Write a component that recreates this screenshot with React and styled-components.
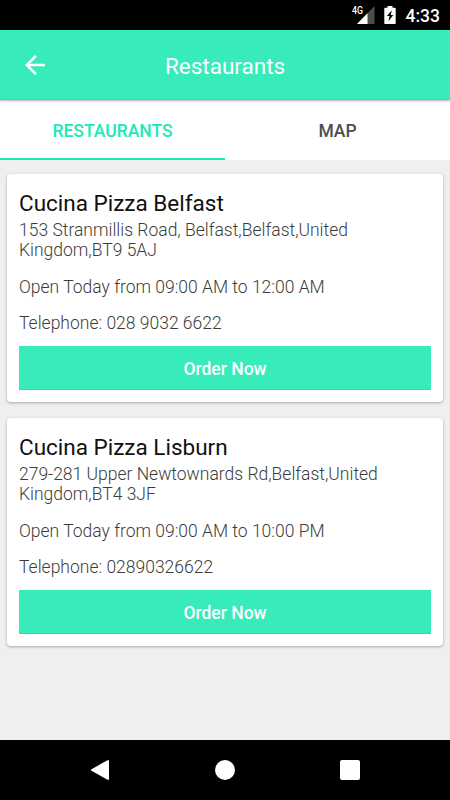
/* ------------------------------------------
   Restaurants - Screen
--------------------------------------------- */
import React from 'react';
import styled, { createGlobalStyle } from 'styled-components';

const restaurants = [
  {
    name: 'Cucina Pizza Belfast',
    address: '153 Stranmillis Road, Belfast,Belfast,United Kingdom,BT9 5AJ',
    hours: 'Open Today from 09:00 AM to 12:00 AM',
    phone: '028 9032 6622',
  },
  {
    name: 'Cucina Pizza Lisburn',
    address: '279-281 Upper Newtownards Rd,Belfast,United Kingdom,BT4 3JF',
    hours: 'Open Today from 09:00 AM to 10:00 PM',
    phone: '02890326622',
  },
];

const SignalIcon = () => (
  <svg width="18" height="18" viewBox="0 0 18 18">
    <path d="M17.500 0v18H0z" fill="#4d4d4d" />
    <path d="M10.500 7.200V18H0z" fill="#fff" />
  </svg>
);

const BatteryIcon = () => (
  <svg width="12" height="18" viewBox="0 0 12 18">
    <path d="M3.500 0h5v1.800H11q.7 0 .7.7V17.300q0 .7-.7.7H1q-.7 0-.7-.7V2.500q0-.7.7-.7h2.500z" fill="#fff" />
    <path d="M7.800 4.300L2.900 10h2.600l-1 5.200L9.300 9H6.700z" fill="#000" />
  </svg>
);

const BackArrow = () => (
  <svg width="30" height="30" viewBox="0 0 24 24">
    <path d="M20 11H7.830l5.590-5.590L12 4l-8 8 8 8 1.410-1.410L7.830 13H20z" fill="#fff" />
  </svg>
);

const NavBack = () => (
  <svg width="20" height="22" viewBox="0 0 20 22">
    <path d="M18 2v18L2 11z" fill="#fff" stroke="#fff" strokeWidth="2" strokeLinejoin="round" />
  </svg>
);

const App = () => (
  <Screen>
    <GlobalStyle />
    <StatusBar>
      <Signal>
        <Network>4G</Network>
        <SignalIcon />
      </Signal>
      <BatteryIcon />
      <Clock>4:33</Clock>
    </StatusBar>
    <Header>
      <BackButton aria-label="Back"><BackArrow /></BackButton>
      <Title>Restaurants</Title>
    </Header>
    <Tabs>
      <Tab $active>Restaurants</Tab>
      <Tab>Map</Tab>
    </Tabs>
    <List>
      {restaurants.map(({ name, address, hours, phone }) => (
        <Card key={name}>
          <Name>{name}</Name>
          <Detail>{address}</Detail>
          <Detail>{hours}</Detail>
          <Detail>Telephone: {phone}</Detail>
          <OrderButton>Order Now</OrderButton>
        </Card>
      ))}
    </List>
    <NavBar>
      <NavBack />
      <NavHome />
      <NavRecent />
    </NavBar>
  </Screen>
);

const GlobalStyle = createGlobalStyle`
  * {
    box-sizing: border-box;
  }
  body {
    margin: 0;
  }
`;

const Screen = styled.div`
  background-color: #efefef;
  display: flex;
  flex-direction: column;
  font-family: Roboto, sans-serif;
  height: 800px;
  overflow: hidden;
  width: 450px;
`;

const StatusBar = styled.div`
  align-items: center;
  background-color: #000;
  display: flex;
  flex: none;
  height: 30px;
  justify-content: flex-end;
  padding-right: 10px;
`;

const Signal = styled.div`
  display: flex;
  margin-right: 9.5px;
  position: relative;
`;

const Network = styled.span`
  color: #fff;
  font-size: 11px;
  font-weight: 500;
  left: -5px;
  line-height: 10px;
  position: absolute;
  top: 0;
  transform: scaleX(.8);
  transform-origin: left;
`;

const Clock = styled.span`
  color: #fff;
  font-size: 17.5px;
  font-weight: 500;
  margin: 1px 0 0 9.5px;
`;

const Header = styled.header`
  align-items: center;
  background-color: #37ebba;
  border-bottom: 1px solid #1ee6b0;
  border-top: 1px solid #2df5c1;
  box-shadow: 0 1px 2px rgba(0, 0, 0, .3);
  display: grid;
  flex: none;
  grid-template-columns: 70px 1fr 70px;
  height: 70px;
  z-index: 1;
`;

const BackButton = styled.button`
  background: none;
  border: 0;
  display: flex;
  justify-content: center;
  padding: 0;
`;

const Title = styled.h1`
  color: #fff;
  font-size: 22.5px;
  font-weight: 400;
  line-height: 26px;
  margin: 1px 0 0;
  text-align: center;
`;

const Tabs = styled.div`
  background-color: #fff;
  display: flex;
  flex: none;
  height: 60px;
`;

const Tab = styled.div`
  align-items: center;
  border-bottom: 2.5px solid ${p => p.$active ? '#1de9b6' : 'transparent'};
  color: ${p => p.$active ? '#1de9b6' : '#4d4d4d'};
  display: flex;
  flex: 1;
  font-size: 17.5px;
  font-weight: 500;
  justify-content: center;
  padding-top: 3px;
  text-transform: uppercase;
`;

const List = styled.main`
  display: flex;
  flex: 1;
  flex-direction: column;
  gap: 16px;
  padding: 14px 7px;
`;

const Card = styled.article`
  background-color: #fff;
  border-radius: 4px;
  box-shadow: 0 1px 3px rgba(0, 0, 0, .3);
  height: 228.2px;
  padding: 16px 12px 12px;
`;

const Name = styled.h2`
  color: #111;
  font-size: 22.5px;
  font-weight: 400;
  line-height: 26.5px;
  margin: 0 0 3px;
`;

const Detail = styled.p`
  color: #3c3c3c;
  font-size: 17.5px;
  font-weight: 300;
  line-height: 20.5px;
  margin: 0 0 16px;
`;

const OrderButton = styled.button`
  background-color: #37ebba;
  border: 0;
  border-bottom: 1px solid #1ee6b0;
  color: #fff;
  display: block;
  font-family: inherit;
  font-size: 17.5px;
  font-weight: 500;
  height: 43.75px;
  margin-top: -3.4px;
  padding: 3px 0 0;
  width: 100%;
`;

const NavBar = styled.nav`
  align-items: center;
  background-color: #000;
  display: flex;
  flex: none;
  height: 60px;
  justify-content: space-between;
  padding: 0 90px;
`;

const NavHome = styled.span`
  background-color: #fff;
  border-radius: 50%;
  height: 20px;
  width: 20px;
`;

const NavRecent = styled.span`
  background-color: #fff;
  border-radius: 2px;
  height: 20px;
  width: 20px;
`;

export default App;
